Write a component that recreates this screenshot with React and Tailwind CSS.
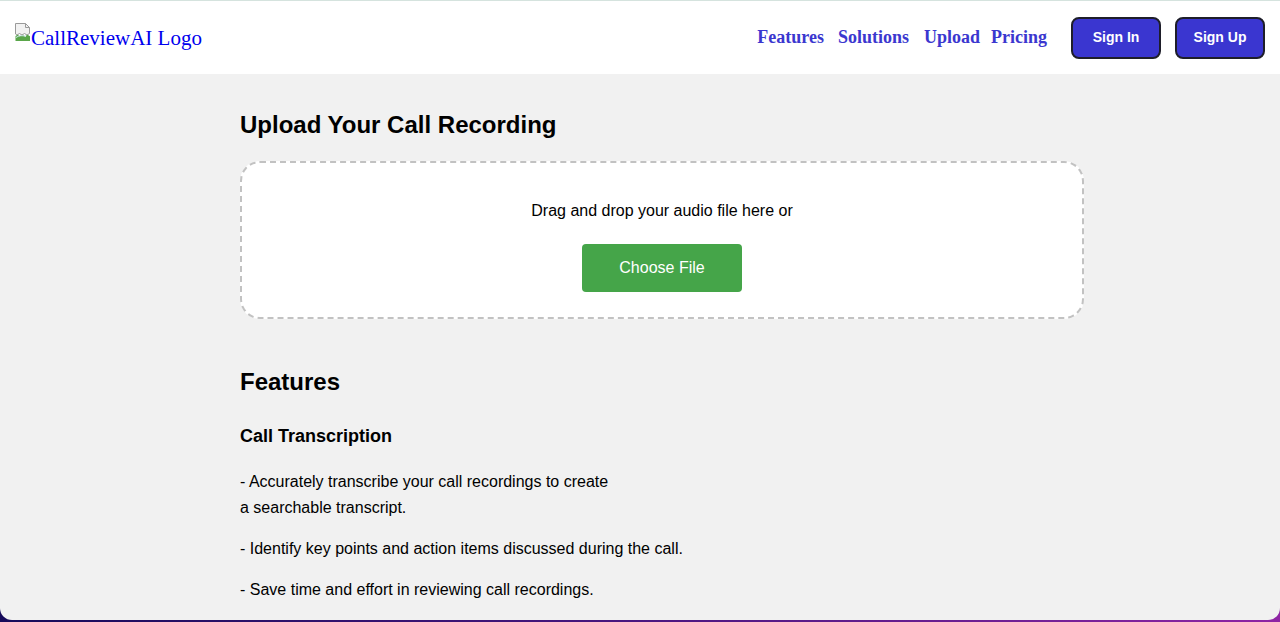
const BrokenImage = () => (
  <svg width="16" height="18" viewBox="0 0 16 18" className="shrink-0">
    <path d="M0.5 0.5h10l4 4v6l-2.5 1.5-2.5-1.5-2.5 1.5-2.5-1.5-2.5 1.5-1.5-1z" fill="#f2f2f2" stroke="#9a9a9a" />
    <path d="M10.5 0.5v4h4" fill="none" stroke="#9a9a9a" />
    <path d="M0.5 13l2-1.2 2.5 1.5 2.5-1.5 2.5 1.5 2.5-1.5 2.5 1.5v4.7H0.5z" fill="#5aa64a" />
    <path d="M1 14.5c3-2 6-2.5 10-1" fill="none" stroke="#cfe6ee" />
  </svg>
);

const Header = () => (
  <header className="flex h-[74px] items-center justify-between border-t border-[#d5e3de] bg-white pl-[15px] pr-[15px]">
    <a href="#" className="-mt-[4px] flex items-start font-['Liberation_Serif',serif] text-[21px] leading-none text-[#0000ee]">
      <BrokenImage />
      <span className="mt-[5px]">CallReviewAI Logo</span>
    </a>
    <div className="flex items-center">
      <nav className="flex items-center font-['Liberation_Serif',serif] text-[18px] font-bold text-[#3b37cf]">
        <a href="#" className="mr-[14px]">Features</a>
        <a href="#" className="mr-[15px]">Solutions</a>
        <a href="#" className="mr-[11px]">Upload</a>
        <a href="#">Pricing</a>
      </nav>
      <div className="ml-[24px] flex gap-[14px] font-['Liberation_Sans',sans-serif]">
        <button className="h-[42px] w-[90px] rounded-[8px] border-2 border-[#1e1e2a] bg-[#3a36d0] text-[14px] font-bold text-white">
          Sign In
        </button>
        <button className="h-[42px] w-[90px] rounded-[8px] border-2 border-[#1e1e2a] bg-[#3a36d0] text-[14px] font-bold text-white">
          Sign Up
        </button>
      </div>
    </div>
  </header>
);

const App = () => {
  return (
    <div className="h-[622px] bg-gradient-to-r from-[#160a5a] via-[#4a1680] to-[#8e24a4] font-['Liberation_Sans',sans-serif] text-black">
      <div className="h-[620px] overflow-hidden rounded-b-[12px] bg-[#f1f1f1]">
        <Header />
        <main className="ml-[240px] w-[844px]">
          <h2 className="mt-[36px] text-[24px] font-bold leading-[30px]">Upload Your Call Recording</h2>
          <div className="mt-[21px] flex h-[158px] flex-col items-center rounded-[20px] border-2 border-dashed border-[#c2c2c2] bg-white">
            <p className="mt-[38px] text-[16px] leading-[20px]">Drag and drop your audio file here or</p>
            <button className="mt-[23px] h-[48px] w-[160px] rounded-[4px] bg-[#45a549] text-[16px] text-white">
              Choose File
            </button>
          </div>

          <h2 className="mt-[48px] text-[24px] font-bold leading-[30px]">Features</h2>
          <h3 className="mt-[27px] text-[18px] font-bold leading-[24px]">Call Transcription</h3>
          <div className="mt-[21px] flex flex-col gap-[15px] text-[16px] leading-[26px]">
            <p>
              - Accurately transcribe your call recordings to create
              <br />
              a searchable transcript.
            </p>
            <p>- Identify key points and action items discussed during the call.</p>
            <p>- Save time and effort in reviewing call recordings.</p>
          </div>
        </main>
      </div>
    </div>
  );
};

export default App;
